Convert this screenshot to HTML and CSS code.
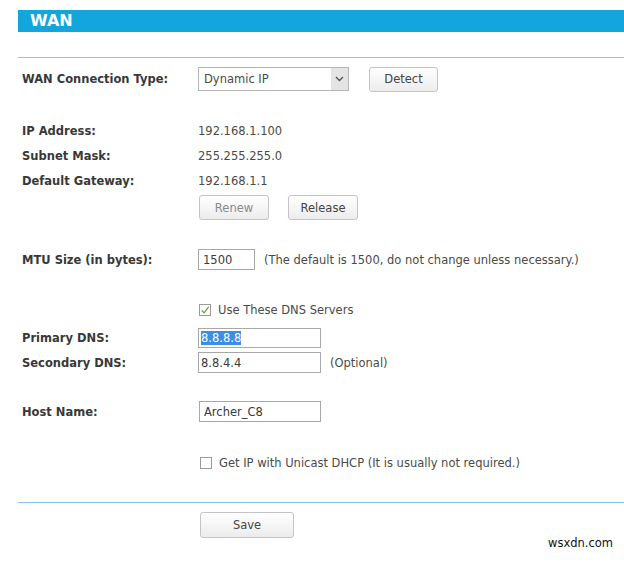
FILE: index.html
```html
<!DOCTYPE html>
<html>
<head>
<meta charset="utf-8">
<link rel="stylesheet" href="styles.css">
</head>
<body>
<div class="page">
  <div class="titlebar">WAN</div>
  <div class="rule rule-top"></div>
  <div class="form">
    <div class="row row-type">
      <div class="label">WAN Connection Type:</div>
      <div class="select"><span class="select-text">Dynamic IP</span><span class="select-arrow"><svg width="9" height="6" viewBox="0 0 9 6"><path d="M1 1 L4.5 4.5 L8 1" fill="none" stroke="#555" stroke-width="1.4"/></svg></span></div>
      <div class="btn btn-detect">Detect</div>
    </div>
    <div class="info first">
      <div class="label">IP Address:</div><div class="value">192.168.1.100</div>
    </div>
    <div class="info">
      <div class="label">Subnet Mask:</div><div class="value">255.255.255.0</div>
    </div>
    <div class="info">
      <div class="label">Default Gateway:</div><div class="value">192.168.1.1</div>
    </div>
    <div class="row row-btns">
      <div class="label"></div>
      <div class="btn btn-renew">Renew</div>
      <div class="btn btn-release">Release</div>
    </div>
    <div class="row row-mtu">
      <div class="label">MTU Size (in bytes):</div>
      <div class="input input-mtu">1500</div>
      <div class="note">(The default is 1500, do not change unless necessary.)</div>
    </div>
    <div class="row row-dnscheck">
      <div class="label"></div>
      <span class="check checked"><svg width="11" height="11" viewBox="0 0 11 11"><path d="M2 5.5 L4.5 8 L9.5 1.5" fill="none" stroke="#5aa43a" stroke-width="1.3"/></svg></span>
      <span class="check-text">Use These DNS Servers</span>
    </div>
    <div class="row row-primary">
      <div class="label">Primary DNS:</div>
      <div class="input input-dns"><span class="sel">8.8.8.8</span></div>
    </div>
    <div class="row row-secondary">
      <div class="label">Secondary DNS:</div>
      <div class="input input-dns">8.8.4.4</div>
      <div class="note">(Optional)</div>
    </div>
    <div class="row row-host">
      <div class="label">Host Name:</div>
      <div class="input input-host">Archer_C8</div>
    </div>
    <div class="row row-unicast">
      <div class="label"></div>
      <span class="check unicast"></span>
      <span class="check-text">Get IP with Unicast DHCP (It is usually not required.)</span>
    </div>
  </div>
  <div class="rule rule-bottom"></div>
  <div class="save-row">
    <div class="btn btn-save">Save</div>
  </div>
</div>
<div class="watermark">wsxdn.com</div>
</body>
</html>
```
FILE: styles.css
```css
html, body {
  margin: 0;
  padding: 0;
  background: #ffffff;
}
body {
  width: 624px;
  height: 563px;
  overflow: hidden;
  position: relative;
  font-family: "DejaVu Sans", Verdana, sans-serif;
  font-size: 11.5px;
  color: #4a4a4a;
}
.page {
  padding: 10px 0 0 18px;
}
.titlebar {
  height: 22px;
  line-height: 22px;
  background: #12a6dc;
  color: #fff;
  font-weight: bold;
  font-size: 16px;
  padding-left: 12px;
}
.rule {
  height: 1px;
  background: #84c9e2;
}
.rule-top {
  margin-top: 25px;
}
.form {
  padding-left: 4px;
}
.row, .info {
  display: flex;
  align-items: center;
}
.label {
  width: 176px;
  flex: none;
  font-weight: bold;
  color: #383838;
}
.value {
  color: #4a4a4a;
}
.row-type {
  margin-top: 9px;
  height: 24px;
}
.select {
  box-sizing: border-box;
  width: 151px;
  height: 24px;
  border: 1px solid #b5b5b5;
  display: flex;
  align-items: center;
  justify-content: space-between;
  background: #fff;
}
.select-text {
  padding-left: 5px;
}
.select-arrow {
  width: 17px;
  height: 22px;
  background: #e4e4e4;
  display: flex;
  align-items: center;
  justify-content: center;
}
.btn {
  box-sizing: border-box;
  height: 25px;
  border: 1px solid #c4c4c4;
  border-radius: 3px;
  background: linear-gradient(#ffffff, #ececec);
  display: flex;
  align-items: center;
  justify-content: center;
  color: #444;
}
.btn-detect {
  width: 69px;
  margin-left: 20px;
}
.info {
  height: 25px;
}
.info.first {
  margin-top: 27px;
}
.row-btns {
  margin-top: 2px;
  height: 25px;
}
.btn-renew {
  width: 70px;
  margin-left: 1px;
  color: #8a8a8a;
}
.btn-release {
  width: 70px;
  margin-left: 19px;
}
.input {
  box-sizing: border-box;
  border: 1px solid #a8a8a8;
  height: 21px;
  display: flex;
  align-items: center;
  padding-left: 4px;
  background: #fff;
  color: #3a3a3a;
}
.row-mtu {
  margin-top: 29px;
  height: 21px;
}
.input-mtu {
  width: 57px;
}
.note {
  margin-left: 9px;
  color: #4a4a4a;
}
.row-dnscheck {
  margin-top: 30px;
  height: 20px;
}
.check {
  box-sizing: border-box;
  width: 12px;
  height: 12px;
  border: 1px solid #9a9a9a;
  margin-left: 1px;
  display: flex;
  align-items: center;
  justify-content: center;
  background: #fff;
}
.check svg {
  display: block;
}
.check-text {
  margin-left: 7px;
  color: #4a4a4a;
}
.row-primary {
  margin-top: 8px;
  height: 20px;
}
.input-dns {
  width: 123px;
  height: 21px;
  padding-left: 2px;
}
.row-primary .input-dns {
  height: 20px;
}
.sel {
  background: #3a8ee6;
  color: #fff;
}
.row-secondary {
  margin-top: 4px;
  height: 21px;
}
.row-host {
  margin-top: 28px;
  height: 21px;
}
.input-host {
  width: 122px;
  margin-left: 1px;
}
.row-unicast {
  margin-top: 30px;
  height: 21px;
}
.check.unicast {
  margin-left: 2px;
}
.rule-bottom {
  margin-top: 29px;
}
.save-row {
  margin-top: 9px;
  padding-left: 182px;
  display: flex;
}
.btn-save {
  width: 94px;
  height: 26px;
}
.watermark {
  position: absolute;
  right: 11px;
  bottom: 13px;
  font-family: "DejaVu Sans", sans-serif;
  font-size: 11.5px;
  color: #111;
}
```
